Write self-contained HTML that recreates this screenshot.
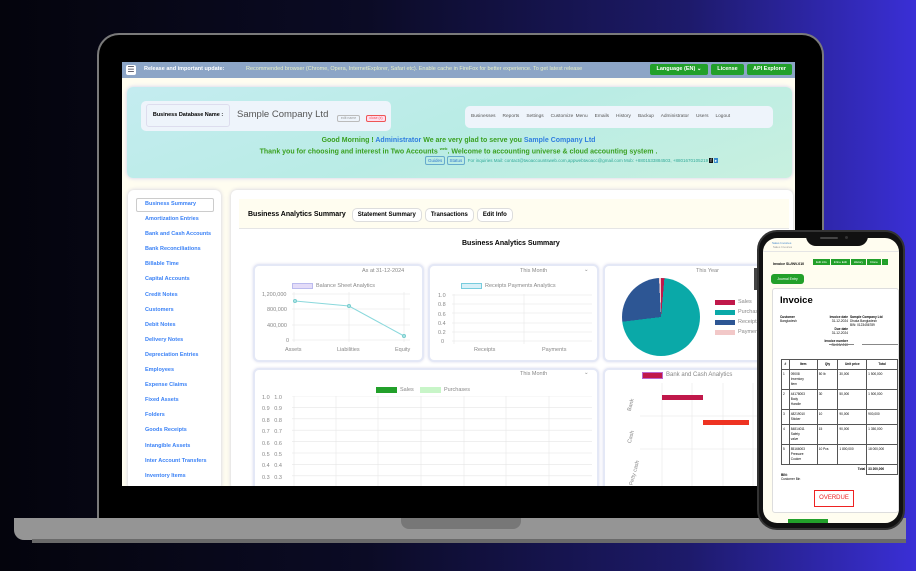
<!DOCTYPE html><html><head><meta charset="utf-8"><style>
*{margin:0;padding:0;box-sizing:border-box}
body{width:916px;height:571px;overflow:hidden;position:relative;font-family:"Liberation Sans",sans-serif;background:linear-gradient(90deg,#04040c 0%,#0b0b25 40%,#1d1a6a 75%,#3a2fd6 100%)}
.a{position:absolute}
.sb a{display:block;color:#3b82f6;font-size:5.5px;font-weight:bold;height:15.1px;line-height:15px;padding-left:17px}
.btn{display:inline-block;border:1px solid #ddd;border-radius:5px;background:#fff;font-size:6px;font-weight:bold;padding:3px 5px;margin-left:3px}
.card{background:#fff;border:2px solid #e4e8f6;border-radius:6px;box-shadow:0 0 3px #dde}
.ax{font-size:5.5px;color:#888}
.ph td,.ph th{border:1px solid #555;font-size:3.2px;line-height:5px;padding:2px 1px;vertical-align:top}
</style></head><body>
<div class="a" style="left:97px;top:33px;width:727px;height:490px;background:#000;border:2px solid #7a7a7a;border-bottom:none;border-radius:22px 22px 0 0"></div>
<div class="a" style="left:14px;top:518px;width:892px;height:22px;background:#959595;border-radius:0 0 0 10px"></div>
<div class="a" style="left:32px;top:539px;width:874px;height:4px;background:#6a6a6a"></div>
<div class="a" style="left:401px;top:518px;width:120px;height:11px;background:#777;border-radius:0 0 8px 8px"></div>
<div class="a" style="left:122px;top:62px;width:673px;height:424px;background:#fffdf0;overflow:hidden">
 <div class="a" style="left:0;top:0;width:673px;height:16px;background:#8ca5c6"></div>
 <div class="a" style="left:4px;top:3px;width:10px;height:10px;background:#fff;border-radius:2px;font-size:8px;line-height:9px;text-align:center;color:#334">☰</div>
 <div class="a" style="left:22px;top:4px;font-size:5.5px;color:#fff;font-weight:bold">Release and important update:</div>
 <div class="a" style="left:124px;top:4px;font-size:5.5px;color:#e8f0c8">Recommended browser (Chrome, Opera, InternetExplorer, Safari etc). Enable cache in FireFox for better experience. To get latest release</div>
 <div class="a" style="left:528px;top:2px;width:58px;height:11px;background:#22a02a;border-radius:2px;color:#fff;font-size:5.5px;font-weight:bold;line-height:11px;text-align:center">Language (EN) ⌄</div>
 <div class="a" style="left:589px;top:2px;width:33px;height:11px;background:#22a02a;border-radius:2px;color:#fff;font-size:5.5px;font-weight:bold;line-height:11px;text-align:center">License</div>
 <div class="a" style="left:625px;top:2px;width:45px;height:11px;background:#22a02a;border-radius:2px;color:#fff;font-size:5.5px;font-weight:bold;line-height:11px;text-align:center">API Explorer</div>
 <div class="a" style="left:5px;top:25px;width:665px;height:91px;border-radius:6px;background:linear-gradient(160deg,#c4ecf0,#b9ece5 50%,#c8f0df);box-shadow:0 0 4px #cce"></div>
 <div class="a" style="left:19px;top:39px;width:250px;height:30px;background:#eef4fb;border-radius:5px"></div>
 <div class="a" style="left:24px;top:42px;width:84px;height:23px;border:1px solid #dde;border-radius:3px;font-size:5.5px;font-weight:bold;line-height:21px;text-align:center">Business Database Name :</div>
 <div class="a" style="left:115px;top:47px;font-size:9.5px;color:#555">Sample Company Ltd</div>
 <div class="a" style="left:215px;top:53px;width:23px;height:7px;border:1px solid #bbb;border-radius:2px;font-size:3.5px;color:#999;text-align:center">edit name</div>
 <div class="a" style="left:244px;top:53px;width:20px;height:7px;border:1px solid #e55;border-radius:2px;font-size:3.5px;color:#e55;text-align:center;background:#fde">close (x)</div>
 <div class="a" style="left:343px;top:44px;width:308px;height:22px;background:#eef4fb;border-radius:5px;font-size:4.8px;color:#555;line-height:22px;word-spacing:1px;padding-left:6px">Businesses &nbsp; Reports &nbsp; Settings &nbsp; Customize Menu &nbsp; Emails &nbsp; History &nbsp; Backup &nbsp; Administrator &nbsp; Users &nbsp; Logout</div>
 <div class="a" style="left:0;top:75px;width:673px;text-align:center;font-size:7px;font-weight:bold;color:#3aa020">Good Morning ! <span style="color:#2f7ee0">Administrator</span> We are very glad to serve you <span style="color:#2f7ee0">Sample Company Ltd</span></div>
 <div class="a" style="left:0;top:84px;width:673px;text-align:center;font-size:7px;font-weight:bold;color:#3aa020">Thank you for choosing and interest in Two Accounts <sup style="font-size:4px">web</sup>. Welcome to accounting universe &amp; cloud accounting system .</div>
 <div class="a" style="left:303px;top:96px;font-size:4.5px;color:#3a9;white-space:nowrap"><span style="border:1px solid #6ac;border-radius:2px;padding:1px 2px;color:#37c">Guides</span> <span style="border:1px solid #6ac;border-radius:2px;padding:1px 2px;color:#37c">Status</span> &nbsp;For inquiries Mail: contact@twoaccountsweb.com,appwebtwoacc@gmail.com Mob: +8801533884503, +8801670105219 <span style="background:#111;color:#fff;padding:0 1px">f</span> <span style="background:#38c;color:#fff;padding:0 1px">▸</span></div>
 <div class="a" style="left:6px;top:128px;width:93px;height:300px;background:#fff;border-radius:6px;box-shadow:0 0 4px #ccd"></div>
 <div class="a" style="left:14px;top:136px;width:78px;height:14px;border:1px solid #ccc;border-radius:2px"></div>
 <div class="a sb" style="left:6px;top:135px;width:93px">
 <a>Business Summary</a><a>Amortization Entries</a><a>Bank and Cash Accounts</a><a>Bank Reconciliations</a><a>Billable Time</a><a>Capital Accounts</a><a>Credit Notes</a><a>Customers</a><a>Debit Notes</a><a>Delivery Notes</a><a>Depreciation Entries</a><a>Employees</a><a>Expense Claims</a><a>Fixed Assets</a><a>Folders</a><a>Goods Receipts</a><a>Intangible Assets</a><a>Inter Account Transfers</a><a>Inventory Items</a></div>
 <div class="a" style="left:109px;top:128px;width:562px;height:300px;background:#fff;border-radius:6px;box-shadow:0 0 4px #ccd"></div>
 <div class="a" style="left:117px;top:137px;width:550px;height:30px;background:#fffdf0;border-bottom:1px solid #e5e5e5"></div>
 <div class="a" style="left:126px;top:146px;font-size:7px;font-weight:bold;white-space:nowrap">Business Analytics Summary<span class="btn" style="margin-left:6px">Statement Summary</span><span class="btn">Transactions</span><span class="btn">Edit Info</span></div>
 <div class="a" style="left:340px;top:178px;font-size:7px;font-weight:bold">Business Analytics Summary</div>
 <div class="a card" style="left:131px;top:202px;width:171px;height:98px"></div>
 <div class="a ax" style="left:240px;top:206px">As at 31-12-2024</div>
 <div class="a" style="left:170px;top:221px;width:21px;height:6px;background:#e4dcf8;border:1px solid #bbe"></div>
 <div class="a ax" style="left:194px;top:221px">Balance Sheet Analytics</div>
 <div class="a ax" style="left:140px;top:230px">1,200,000</div><div class="a ax" style="left:145px;top:245px">800,000</div><div class="a ax" style="left:145px;top:261px">400,000</div><div class="a ax" style="left:164px;top:276px">0</div>
 <div class="a ax" style="left:163px;top:285px">Assets</div><div class="a ax" style="left:215px;top:285px">Liabilities</div><div class="a ax" style="left:273px;top:285px">Equity</div>
 <svg class="a" style="left:170px;top:230px" width="120" height="52"><g stroke="#e6e6e6" stroke-width=".6"><line x1="0" y1="2" x2="118" y2="2"/><line x1="0" y1="17" x2="118" y2="17"/><line x1="0" y1="33" x2="118" y2="33"/><line x1="0" y1="48" x2="118" y2="48"/><line x1="2" y1="0" x2="2" y2="50"/><line x1="57" y1="0" x2="57" y2="50"/><line x1="112" y1="0" x2="112" y2="50"/></g><polyline points="3,9 57,14 112,44" fill="none" stroke="#8ad8dc" stroke-width="1"/><g fill="#b8e8ec" stroke="#7cc"><circle cx="3" cy="9" r="1.5"/><circle cx="57" cy="14" r="1.5"/><circle cx="112" cy="44" r="1.5"/></g></svg>
 <div class="a card" style="left:306px;top:202px;width:171px;height:98px"></div>
 <div class="a ax" style="left:398px;top:206px">This Month</div><div class="a ax" style="left:462px;top:205px">⌄</div>
 <div class="a" style="left:339px;top:221px;width:21px;height:6px;background:#d8f0f8;border:1px solid #7cd"></div>
 <div class="a ax" style="left:363px;top:221px">Receipts Payments Analytics</div>
 <div class="a ax" style="left:316px;top:230px;line-height:9.3px">1.0<br>0.8<br>0.6<br>0.4<br>0.2<br>&nbsp;&nbsp;0</div>
 <svg class="a" style="left:330px;top:232px" width="140" height="52"><g stroke="#e6e6e6" stroke-width=".6"><line x1="0" y1="1" x2="140" y2="1"/><line x1="0" y1="10" x2="140" y2="10"/><line x1="0" y1="19" x2="140" y2="19"/><line x1="0" y1="29" x2="140" y2="29"/><line x1="0" y1="38" x2="140" y2="38"/><line x1="0" y1="47" x2="140" y2="47"/><line x1="2" y1="0" x2="2" y2="50"/><line x1="72" y1="0" x2="72" y2="50"/></g></svg>
 <div class="a ax" style="left:352px;top:285px">Receipts</div><div class="a ax" style="left:420px;top:285px">Payments</div>
 <div class="a card" style="left:481px;top:202px;width:190px;height:98px"></div>
 <div class="a ax" style="left:574px;top:206px">This Year</div>
 <div class="a" style="left:500px;top:216px;width:78px;height:78px;border-radius:50%;background:conic-gradient(#c0184a 0 5deg,#0aa9a8 5deg 263deg,#2d5694 263deg 357deg,#f2c8c8 357deg)"></div>
 <div class="a" style="left:593px;top:238px;width:20px;height:5px;background:#c0184a"></div><div class="a ax" style="left:616px;top:237px">Sales</div>
 <div class="a" style="left:593px;top:248px;width:20px;height:5px;background:#0aa9a8"></div><div class="a ax" style="left:616px;top:247px">Purchases</div>
 <div class="a" style="left:593px;top:258px;width:20px;height:5px;background:#2d5694"></div><div class="a ax" style="left:616px;top:257px">Receipts</div>
 <div class="a" style="left:593px;top:268px;width:20px;height:5px;background:#f2c8c8"></div><div class="a ax" style="left:616px;top:267px">Payments</div>
 <div class="a card" style="left:131px;top:306px;width:346px;height:130px"></div>
 <div class="a ax" style="left:398px;top:309px">This Month</div><div class="a ax" style="left:462px;top:308px">⌄</div>
 <div class="a" style="left:254px;top:325px;width:21px;height:6px;background:#22a02a"></div><div class="a ax" style="left:278px;top:325px">Sales</div>
 <div class="a" style="left:298px;top:325px;width:21px;height:6px;background:#c8f5c8"></div><div class="a ax" style="left:322px;top:325px">Purchases</div>
 <div class="a ax" style="left:140px;top:331px;line-height:11.4px;white-space:pre">1.0   1.0
0.9   0.9
0.8   0.8
0.7   0.7
0.6   0.6
0.5   0.5
0.4   0.4
0.3   0.3</div>
 <svg class="a" style="left:170px;top:334px" width="300" height="90"><g stroke="#e6e6e6" stroke-width=".6"><line x1="0" y1="0" x2="300" y2="0"/><line x1="0" y1="11.4" x2="300" y2="11.4"/><line x1="0" y1="22.8" x2="300" y2="22.8"/><line x1="0" y1="34.2" x2="300" y2="34.2"/><line x1="0" y1="45.6" x2="300" y2="45.6"/><line x1="0" y1="57" x2="300" y2="57"/><line x1="0" y1="68.4" x2="300" y2="68.4"/><line x1="0" y1="79.8" x2="300" y2="79.8"/><line x1="2" y1="0" x2="2" y2="90"/><line x1="44" y1="0" x2="44" y2="90"/><line x1="86" y1="0" x2="86" y2="90"/><line x1="129" y1="0" x2="129" y2="90"/><line x1="172" y1="0" x2="172" y2="90"/><line x1="214" y1="0" x2="214" y2="90"/><line x1="257" y1="0" x2="257" y2="90"/></g></svg>
 <div class="a card" style="left:481px;top:306px;width:190px;height:130px"></div>
 <div class="a" style="left:520px;top:310px;width:21px;height:7px;background:#c0184a;border:1px solid #b6c"></div><div class="a ax" style="left:544px;top:310px;font-size:6px">Bank and Cash Analytics</div>
 <svg class="a" style="left:518px;top:321px" width="150" height="110"><g stroke="#e6e6e6" stroke-width=".6"><line x1="22" y1="0" x2="22" y2="110"/><line x1="52" y1="0" x2="52" y2="110"/><line x1="83" y1="0" x2="83" y2="110"/><line x1="113" y1="0" x2="113" y2="110"/><line x1="0" y1="33" x2="150" y2="33"/><line x1="0" y1="66" x2="150" y2="66"/></g><rect x="22" y="12" width="41" height="5" fill="#c0184a"/><rect x="63" y="37" width="46" height="5" fill="#ee3322"/></svg>
 <div class="a ax" style="left:503px;top:340px;transform:rotate(-75deg)">Bank</div>
 <div class="a ax" style="left:503px;top:372px;transform:rotate(-75deg)">Cash</div>
 <div class="a ax" style="left:500px;top:408px;transform:rotate(-75deg)">Petty cash</div>
</div>
<div class="a" style="left:757px;top:230px;width:148px;height:300px;background:#111;border-radius:20px;border:2px solid #333"></div>
<div class="a" style="left:754px;top:268px;width:3px;height:22px;background:#444"></div>
<div class="a" style="left:763px;top:238px;width:136px;height:285px;background:#fffdf0;border-radius:14px;overflow:hidden">
 <div class="a" style="left:9px;top:3px;font-size:3px;color:#48c">Sales Invoices<br><span style="color:#999">&nbsp;Sales Invoices</span></div>
 <div class="a" style="left:0;top:13px;width:136px;height:1px;background:#e5e5e5"></div>
 <div class="a" style="left:10px;top:24px;font-size:3.5px;font-weight:bold;white-space:nowrap">Invoice SL/INV-010</div>
 <div class="a" style="left:50px;top:22px;font-size:3px;white-space:nowrap"><span style="background:#22a02a;color:#fff;padding:1px 3px">Edit info</span> <span style="background:#22a02a;color:#fff;padding:1px 3px">Inline Edit</span> <span style="background:#22a02a;color:#fff;padding:1px 3px">History</span> <span style="background:#22a02a;color:#fff;padding:1px 3px">Clone</span> <span style="background:#22a02a;color:#fff;padding:1px 3px">.</span></div>
 <div class="a" style="left:8px;top:36px;width:33px;height:10px;background:#22a02a;border-radius:3px;color:#fff;font-size:3.5px;line-height:10px;text-align:center">Journal Entry</div>
 <div class="a" style="left:9px;top:50px;width:127px;height:225px;background:#fff;border:1px solid #ddd;border-radius:3px"></div>
 <div class="a" style="left:17px;top:57px;font-size:9.5px;font-weight:bold">Invoice</div>
 <div class="a" style="left:17px;top:77px;font-size:3.2px;line-height:4px"><b>Customer</b><br>Bangladesh</div>
 <div class="a" style="left:55px;top:77px;width:30px;text-align:right;font-size:3.2px;line-height:4px"><b>Invoice date</b><br>31-12-2024<br><br><b>Due date</b><br>31-12-2024<br><br><b>Invoice number</b><br>SL-INV-010</div>
 <div class="a" style="left:87px;top:77px;font-size:3.2px;line-height:4px"><b>Sample Company Ltd</b><br>Dhaka Bangladesh<br>BIN: 0123456789</div>
 <div class="a" style="left:66px;top:106px;width:25px;height:1px;background:#888"></div><div class="a" style="left:99px;top:106px;width:36px;height:1px;background:#888"></div>
 <table class="a ph" style="left:18px;top:121px;width:117px;border-collapse:collapse">
 <tr><th>#</th><th>Item</th><th>Qty</th><th>Unit price</th><th>Total</th></tr>
 <tr><td>1</td><td>09008<br>Inventory<br>Item</td><td>50 lb</td><td>30,000</td><td>1 500,000</td></tr>
 <tr><td>2</td><td>44178003<br>Body<br>Handle</td><td>30</td><td>50,000</td><td>1 500,000</td></tr>
 <tr><td>3</td><td>48219010<br>Sticker</td><td>10</td><td>90,000</td><td>900,000</td></tr>
 <tr><td>4</td><td>84814011<br>Safety<br>valve</td><td>15</td><td>90,000</td><td>1 350,000</td></tr>
 <tr><td>5</td><td>85166003<br>Pressure<br>Cooker</td><td>10 Pcs</td><td>1 800,000</td><td>18 000,000</td></tr>
 <tr><td colspan="4" style="text-align:right;border:none"><b>Total</b></td><td><b>33 200,000</b></td></tr></table>
 <div class="a" style="left:18px;top:235px;font-size:3.2px;line-height:4px"><b>BIN:</b><br>Customer Bin</div>
 <div class="a" style="left:51px;top:252px;width:40px;height:17px;border:1.5px solid #e22;color:#e22;font-size:6px;line-height:14px;text-align:center">OVERDUE</div>
 <div class="a" style="left:25px;top:281px;width:40px;height:4px;background:#22a02a"></div>
</div>
<div class="a" style="left:806px;top:232px;width:62px;height:14px;background:#111;border-radius:0 0 10px 10px"></div>
<div class="a" style="left:820px;top:237px;width:18px;height:2px;background:#444;border-radius:1px"></div>
<div class="a" style="left:845px;top:236px;width:3px;height:3px;background:#333;border-radius:50%"></div>
</body></html>
